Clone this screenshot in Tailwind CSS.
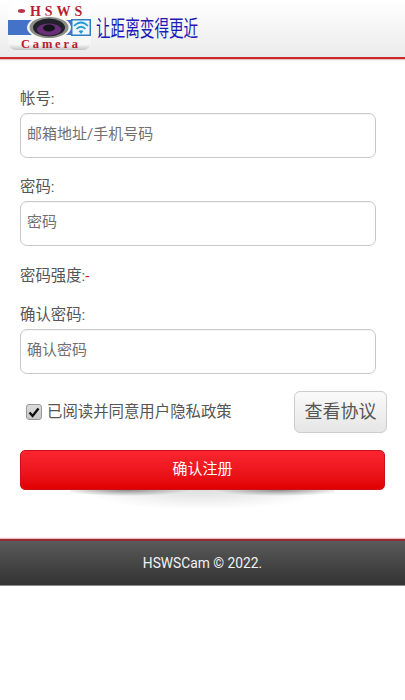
<!DOCTYPE html>
<html lang="zh-CN">

<head>
  <meta charset="UTF-8" />
  <title>HSWSCam</title>
  <script src="https://cdn.jsdelivr.net/npm/@tailwindcss/browser@4"></script>
</head>

<body class="bg-white font-['Roboto','Noto_Sans_CJK_SC',sans-serif] text-[#333]">
  <!-- Header -->
  <header class="h-[59px] flex items-start bg-gradient-to-b from-white to-[#ebebeb] border-b-2 border-[#c9282d] shadow-[0_1px_1px_rgba(200,40,45,0.3)]">
    <svg class="ml-[8px] mt-[3px] shrink-0" width="83" height="47" viewBox="0 0 83 47">
      <defs>
        <clipPath id="logoClip"><rect width="83" height="47" rx="8" /></clipPath>
        <linearGradient id="logoBg" x1="0" y1="0" x2="0" y2="1">
          <stop offset="0" stop-color="#fff" />
          <stop offset="0.88" stop-color="#f6f6f6" />
          <stop offset="1" stop-color="#c4c4c4" />
        </linearGradient>
      </defs>
      <g clip-path="url(#logoClip)">
        <rect width="83" height="47" fill="url(#logoBg)" />
        <rect x="0" y="17" width="64" height="15" fill="#4472c8" />
        <rect x="63" y="16" width="20" height="17" fill="#2f7fc4" />
        <rect x="64.5" y="17.5" width="17" height="14" fill="#eef6fb" />
      </g>
      <ellipse cx="13.5" cy="8" rx="3.6" ry="1.9" fill="#b8324a" />
      <text x="22" y="13" font-family="Liberation Serif" font-weight="700" font-size="14" letter-spacing="3.9" fill="#b51c30">HSWS</text>
      <text x="13" y="45" font-family="Liberation Serif" font-weight="700" font-size="12.5" letter-spacing="2.8" fill="#b51c30">Camera</text>
      <ellipse cx="41" cy="24.5" rx="22" ry="12" fill="#f4f4f0" />
      <ellipse cx="41" cy="24.5" rx="19.5" ry="10.5" fill="#8c8c86" />
      <ellipse cx="41" cy="24.5" rx="16" ry="9" fill="#23222c" />
      <ellipse cx="41" cy="26.5" rx="12" ry="6" fill="#6a2f78" />
      <ellipse cx="41" cy="25" rx="6" ry="3.5" fill="#15131c" />
      <g fill="none" stroke="#1f9bd6" stroke-width="1.7">
        <path d="M66 23 Q73 16 80 23" />
        <path d="M68.5 26 Q73 21.5 77.5 26" />
      </g>
      <path d="M70.5 28 L73 31 L75.5 28 Q73 26.5 70.5 28Z" fill="#1f9bd6" />
    </svg>
    <span class="ml-[5px] mt-[16px] w-[102px] whitespace-nowrap text-[14.6px] leading-[22px] text-[#1a1ab4] scale-y-[1.45] font-['Noto_Sans_CJK_SC',sans-serif]">让距离变得更近</span>
  </header>

  <!-- Register form -->
  <main class="px-[20px] pt-[30px]">
    <form class="text-[15.4px] leading-[20px] text-[#555]">
      <label for="account" class="block">帐号:</label>
      <input id="account" type="text" placeholder="邮箱地址/手机号码"
        class="block w-[356px] h-[45px] mt-[4px] px-[6px] pb-[3px] text-[15px] bg-white border border-[#c8c8c8] rounded-[7px] placeholder:text-[#707070] shadow-[inset_0_1px_1px_rgba(0,0,0,0.04)]" />

      <label for="password" class="block mt-[19px]">密码:</label>
      <input id="password" type="password" placeholder="密码"
        class="block w-[356px] h-[45px] mt-[4px] px-[6px] pb-[3px] text-[15px] bg-white border border-[#c8c8c8] rounded-[7px] placeholder:text-[#707070] shadow-[inset_0_1px_1px_rgba(0,0,0,0.04)]" />

      <div class="mt-[20px]">密码强度:<span class="text-[#e01010]">-</span></div>

      <label for="confirm" class="block mt-[19px]">确认密码:</label>
      <input id="confirm" type="password" placeholder="确认密码"
        class="block w-[356px] h-[45px] mt-[4px] px-[6px] pb-[3px] text-[15px] bg-white border border-[#c8c8c8] rounded-[7px] placeholder:text-[#707070] shadow-[inset_0_1px_1px_rgba(0,0,0,0.04)]" />

      <!-- Agreement row -->
      <div class="flex items-center justify-between mt-[17px] ml-[6px] -mr-[2px] h-[42px]">
        <label class="flex items-center gap-[5px] text-[#555]">
          <span class="flex items-center justify-center w-[16px] h-[16px] rounded-[3px] border border-[#999] bg-gradient-to-b from-[#dcdcdc] to-[#c8c8c8]">
            <svg width="12" height="12" viewBox="0 0 12 12"><path d="M1.5 6.5 L4.6 10 L10.5 2.5" fill="none" stroke="#111" stroke-width="2.4" /></svg>
          </span>
          已阅读并同意用户隐私政策
        </label>
        <button type="button" class="w-[93px] h-[42px] text-[18px] text-[#555] rounded-[6px] border border-[#ccc] bg-gradient-to-b from-[#fafafa] to-[#e6e6e6]">查看协议</button>
      </div>

      <button type="button" class="block w-[365px] h-[40px] mt-[17px] pb-[3px] text-[15px] text-white rounded-[5px] border border-[#c9101a] bg-gradient-to-b from-[#fb2530] to-[#e00000]">确认注册</button>
      <!-- Curved shadow under the button -->
      <div class="h-[20px] mx-[50px] bg-[radial-gradient(ellipse_65px_6px_at_21%_0%,rgba(0,0,0,0.42),transparent),radial-gradient(ellipse_65px_6px_at_79%_0%,rgba(0,0,0,0.42),transparent),radial-gradient(ellipse_45%_100%_at_50%_0%,rgba(0,0,0,0.13),transparent)]"></div>
    </form>
  </main>

  <!-- Footer -->
  <footer class="mt-[29px] h-[47px] flex items-center justify-center border-t-2 border-[#8f2f33] border-b border-b-[#8a8a8a] bg-gradient-to-b from-[#5a5a5a] to-[#333] text-[13.8px] text-[#f2f2f2] shadow-[0_-1px_1px_rgba(230,60,70,0.35)]">
    HSWSCam © 2022.
  </footer>
</body>

</html>
